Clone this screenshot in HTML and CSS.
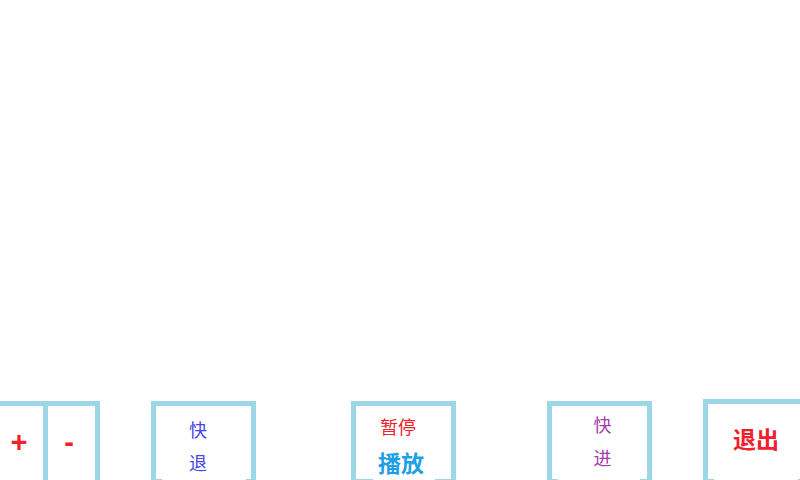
FILE: index.html
```html
<!DOCTYPE html>
<html lang="zh">
<head>
<meta charset="utf-8">
<title>播放控制</title>
<link rel="stylesheet" href="styles.css">
</head>
<body>
<div class="screen">
  <div class="stage"></div>
  <div class="bar">
    <div class="group">
      <div class="cell cell-plus"><span class="sign">+</span></div>
      <div class="cell cell-minus"><span class="sign">-</span></div>
    </div>
    <div class="box box-back">
      <span class="line">快</span>
      <span class="line">退</span>
    </div>
    <div class="box box-play">
      <span class="pause">暂停</span>
      <span class="play">播放</span>
    </div>
    <div class="box box-fwd">
      <span class="line">快</span>
      <span class="line">进</span>
    </div>
    <div class="box box-exit">
      <span class="exit">退出</span>
    </div>
  </div>
</div>
</body>
</html>
```
FILE: styles.css
```css
html, body {
  margin: 0;
  padding: 0;
  background: #ffffff;
}
body {
  font-family: "Noto Sans CJK SC", "Noto Sans", sans-serif;
}
.screen {
  width: 800px;
  height: 480px;
  overflow: hidden;
  display: flex;
  flex-direction: column;
}
.stage {
  flex: 1;
}
.bar {
  height: 81px;
  display: flex;
  align-items: flex-start;
  flex-shrink: 0;
}
.bar > * {
  flex-shrink: 0;
}
.group {
  margin-left: -5px;
  margin-top: 2px;
  height: 85px;
  display: flex;
  border: 5px solid #9dd6e6;
  border-bottom: none;
  box-sizing: border-box;
}
.cell {
  display: flex;
  justify-content: center;
  padding-top: 21px;
  line-height: 30px;
  font-family: "Liberation Sans", "Noto Sans CJK SC", sans-serif;
  font-weight: bold;
  font-size: 29px;
  color: #f0202c;
}
.cell-plus {
  width: 48px;
  padding-right: 5px;
  box-sizing: border-box;
  border-right: 5px solid #9dd6e6;
}
.cell-minus {
  width: 47px;
  padding-right: 5px;
  box-sizing: border-box;
}
.box {
  width: 105px;
  height: 79px;
  margin-top: 2px;
  box-sizing: border-box;
  border: 5px solid #9dd6e6;
  border-bottom: none;
  padding-bottom: 1px;
  display: flex;
  flex-direction: column;
  align-items: center;
  background-origin: border-box;
  background-repeat: no-repeat;
}
.box-back {
  margin-left: 51px;
  padding-top: 7px;
  padding-right: 11px;
  color: #4646e6;
  background-image: linear-gradient(#9dd6e6, #9dd6e6), linear-gradient(#9dd6e6, #9dd6e6);
  background-size: 11px 1px, 10px 1px;
  background-position: left bottom, right bottom;
}
.box-play {
  margin-left: 95px;
  padding-top: 5px;
  background-image: linear-gradient(#9dd6e6, #9dd6e6), linear-gradient(#9dd6e6, #9dd6e6);
  background-size: 22px 1px, 21px 1px;
  background-position: left bottom, right bottom;
}
.box-fwd {
  margin-left: 91px;
  padding-top: 2px;
  padding-left: 6px;
  color: #a43cac;
  background-image: linear-gradient(#9dd6e6, #9dd6e6), linear-gradient(#9dd6e6, #9dd6e6);
  background-size: 11px 1px, 12px 1px;
  background-position: left bottom, right bottom;
}
.box-exit {
  margin-left: 51px;
  margin-top: 0;
  height: 81px;
  width: 106px;
  padding-top: 19px;
  background-image: linear-gradient(#9dd6e6, #9dd6e6), linear-gradient(#9dd6e6, #9dd6e6);
  background-size: 11px 1px, 11px 1px;
  background-position: left bottom, right bottom;
}
.line {
  font-size: 18px;
  line-height: 33px;
}
.pause {
  font-size: 18px;
  line-height: 30px;
  color: #f0202c;
  padding-right: 11px;
}
.play {
  font-size: 23px;
  line-height: 42px;
  font-weight: bold;
  color: #1ea0e6;
  padding-right: 5px;
}
.exit {
  font-size: 23px;
  line-height: 30px;
  font-weight: bold;
  color: #f0202c;
}
```
